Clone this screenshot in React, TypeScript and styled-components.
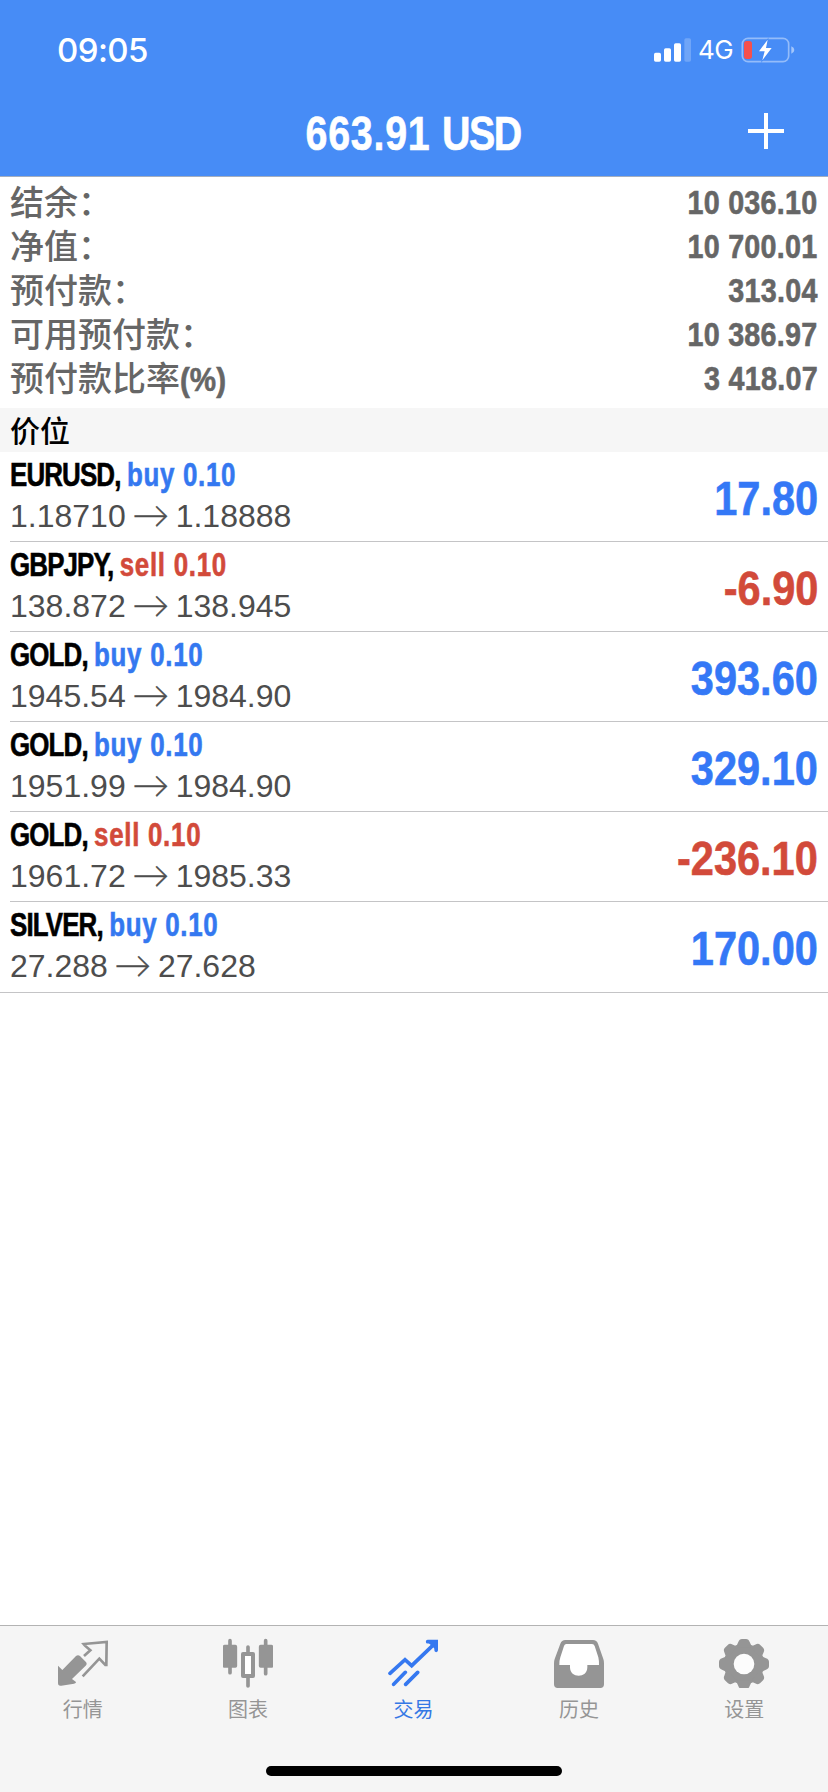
import React from 'react';
import styled, { createGlobalStyle } from 'styled-components';

const colors = {
  header: '#478cf6',
  blue: '#3478f0',
  red: '#d24a3a',
  label: '#666666',
  price: '#4d4d4d',
  line: '#c4c4c6',
  bar: '#f6f6f6',
  tab: '#959595',
};

const latin = '"Liberation Sans", Arial, sans-serif';
const chinese = '"Noto Sans CJK SC", sans-serif';

const GlobalStyle = createGlobalStyle`
  * { box-sizing: border-box; }
  body { margin: 0; background: #fff; font-family: ${latin}; }
`;

const Screen = styled.div`
  display: flex;
  flex-direction: column;
  width: 828px;
  height: 1792px;
  background: #fff;
`;

const Header = styled.header`
  height: 177px;
  flex: none;
  background: ${colors.header};
  border-bottom: 1px solid #a3aebf;
  color: #fff;
`;

const StatusBar = styled.div`
  display: flex;
  align-items: center;
  justify-content: space-between;
  height: 100px;
  padding: 0 33px 0 57px;
`;

const Clock = styled.time`
  font: 550 33px/40px Inter, sans-serif;
  letter-spacing: -0.6px;
`;

const StatusIcons = styled.div`
  display: flex;
  align-items: center;
`;

const Network = styled.span`
  margin: 0 8px 0 7px;
  font: 400 26px/32px Inter, sans-serif;
  letter-spacing: -0.6px;
`;

const TitleBar = styled.div`
  display: grid;
  grid-template-columns: 80px 1fr 80px;
  align-items: center;
  height: 66px;
`;

const Condensed = styled.span<{ $scale: number; $origin?: string; $spacing?: number }>`
  display: inline-block;
  font-weight: 700;
  white-space: pre;
  letter-spacing: ${p => p.$spacing ?? 0}px;
  transform: scaleX(${p => p.$scale});
  transform-origin: ${p => p.$origin ?? 'left'} center;
  -webkit-text-stroke: 0.6px currentColor;
`;

const Title = styled.h1`
  grid-column: 2;
  margin: 0;
  padding: 2px 2px 0 0;
  text-align: center;
  font-size: 48px;
  line-height: 56px;
`;

const Tight = styled.span<{ $spacing: number }>`
  letter-spacing: ${p => p.$spacing}px;
`;

const AddButton = styled.button`
  display: flex;
  padding: 0 0 4px;
  border: 0;
  background: none;
  color: inherit;
`;

const Summary = styled.dl`
  flex: none;
  margin: 0;
  padding: 3px 10px 8px;
  color: ${colors.label};
`;

const SummaryRow = styled.div`
  display: flex;
  justify-content: space-between;
  height: 44px;
`;

const SummaryLabel = styled.dt`
  font-family: ${chinese};
  font-size: 34px;
  font-weight: 500;
  line-height: 42px;
  white-space: nowrap;
`;

const LabelSuffix = styled(Condensed)`
  font-family: ${latin};
  font-size: 34px;
  line-height: 40px;
`;

const SummaryValue = styled.dd`
  margin: 0;
  font-size: 33px;
  line-height: 46px;
`;

const SectionTitle = styled.h2`
  flex: none;
  height: 44px;
  margin: 0;
  padding-left: 10px;
  background: ${colors.bar};
  font: 500 30px/42px ${chinese};
`;

const Positions = styled.ul`
  flex: none;
  margin: 0;
  padding: 0;
  list-style: none;
  border-bottom: 1px solid ${colors.line};
`;

const PositionRow = styled.li`
  display: flex;
  justify-content: space-between;
  height: 90px;
  margin-left: 10px;
  padding-right: 10px;
  border-bottom: 1px solid ${colors.line};

  &:last-child { border-bottom-color: transparent; }
`;

const Deal = styled.div`
  font-size: 33px;
  line-height: 45px;
`;

const Side = styled.span<{ $side: 'buy' | 'sell' }>`
  letter-spacing: 0.9px;
  color: ${p => (p.$side === 'buy' ? colors.blue : colors.red)};
`;

const Prices = styled.div`
  display: flex;
  font-size: 32px;
  line-height: 38px;
  color: ${colors.price};
`;

const Arrow = styled.span`
  width: 50px;
  text-align: center;
  font-family: Lato, sans-serif;
  font-size: 37px;
  font-weight: 300;
  line-height: 33px;
  -webkit-text-stroke: 0.4px currentColor;
`;

const Amount = styled.div<{ $loss: boolean }>`
  font-size: 48px;
  line-height: 94px;
  color: ${p => (p.$loss ? colors.red : '#3478f6')};
`;

const Footer = styled.footer`
  display: flex;
  flex-direction: column;
  flex: none;
  height: 167px;
  margin-top: auto;
  padding-bottom: 16px;
  background: #f5f5f5;
  border-top: 1px solid #b3b3b3;
`;

const Tabs = styled.nav`
  display: grid;
  grid-template-columns: repeat(5, 1fr);
  padding: 12px 1px 0 0;
`;

const Tab = styled.button<{ $active?: boolean }>`
  display: flex;
  flex-direction: column;
  align-items: center;
  gap: 6px;
  padding: 0;
  border: 0;
  background: none;
  color: ${p => (p.$active ? '#3578e5' : colors.tab)};
  font: 400 20px/30px ${chinese};
`;

const HomeIndicator = styled.div`
  width: 296px;
  height: 10px;
  margin: auto auto 0;
  border-radius: 5px;
  background: #000;
`;

const SignalIcon = () => (
  <svg width="37" height="24" viewBox="0 0 111 72" fill="#fff">
    <rect x="0" y="44" width="21" height="27" rx="5" />
    <rect x="30" y="31" width="21" height="40" rx="5" />
    <rect x="60" y="16" width="21" height="55" rx="5" />
    <rect x="91" y="1" width="20" height="70" rx="5" opacity="0.22" />
  </svg>
);

const BatteryIcon = () => (
  <svg width="54" height="26" viewBox="0 0 162 78" fill="none">
    <rect x="4" y="4" width="139" height="70" rx="17" stroke="#fff" strokeOpacity="0.42" strokeWidth="5" />
    <path d="M151 28q9 4 9 11t-9 11z" fill="#fff" fillOpacity="0.5" />
    <rect x="9" y="12" width="24" height="54" rx="8" fill="#f4504d" />
    <path d="M83 1L50 46h18l-8 32 37-47H77z" fill={colors.header} />
    <path d="M80 8L54 43h17l-7 27 28-37H75z" fill="#fff" />
  </svg>
);

const PlusIcon = () => (
  <svg width="36" height="36" viewBox="0 0 36 36" stroke="#fff" strokeWidth="4">
    <path d="M18 0v36M0 18h36" />
  </svg>
);

const QuotesIcon = () => (
  <svg width="50" height="50" viewBox="171 84 150 150">
    <path d="M171 167L184 180 225 138Q231 133 237 138L254 155Q260 161 254 167L213 207 225 216Q226 220 219 221L181 227Q171 229 171 219Z" fill="currentColor" />
    <path d="M249 138L268 121 252 107 248 102 317 96 316 165 313 165 295 146 245 199" fill="none" stroke="currentColor" strokeWidth="8" />
  </svg>
);

const ChartIcon = () => (
  <svg width="50" height="50" viewBox="669 84 150 150" fill="none" stroke="currentColor" strokeLinecap="round">
    <path d="M690 92v96M797 92v99M744 111v14M744 204v24" strokeWidth="11" />
    <rect x="671" y="107" width="38" height="64" rx="3" fill="currentColor" strokeWidth="5" />
    <rect x="779" y="107" width="38" height="64" rx="3" fill="currentColor" strokeWidth="5" />
    <rect x="729" y="132" width="30" height="66" fill="#fff" strokeWidth="12" strokeLinejoin="round" />
  </svg>
);

const TradeIcon = () => (
  <svg width="50" height="50" viewBox="324 84 150 150" fill="none" stroke="#3578f0" strokeWidth="11" strokeLinecap="round">
    <path d="M330 190L375 149 395 167 464 101M341 223L376 187M377 223L413 187" strokeLinejoin="miter" />
    <path d="M442 95H469V121Z" fill="#3578f0" stroke="none" />
    <path d="M443 95H468.500V121" />
  </svg>
);

const HistoryIcon = () => (
  <svg width="50" height="50" viewBox="75 84 150 150">
    <path
      fill="currentColor"
      d="M109 90H192Q203 90 207 101L223 147Q225 152 225 160V223Q225 234 214 234H86Q75 234 75 223V160Q75 152 77 147L94 101Q98 90 109 90Z"
    />
    <path
      fill="#fff"
      d="M112 102H189Q195 102 197 108L208 142Q210 150 210 165H175V172C175 206 123 206 123 172V165H91Q91 150 94 142L105 108Q107 102 112 102Z"
    />
  </svg>
);

const SettingsIcon = () => (
  <svg width="50" height="50" viewBox="-75 -78 150 150">
    <g fill="currentColor">
      <circle r="60" />
      {[0, 45, 90, 135, 180, 225, 270, 315].map(angle => (
        <path
          key={angle}
          transform={`rotate(${angle})`}
          d="M-29 -50Q-20 -55 -17 -66Q-14 -75 -6 -75H6Q14 -75 17 -66Q20 -55 29 -50Z"
        />
      ))}
    </g>
    <circle r="31" fill="#fcfcfc" />
  </svg>
);

const summary = [
  { label: '结余：', value: '10 036.10' },
  { label: '净值：', value: '10 700.01' },
  { label: '预付款：', value: '313.04' },
  { label: '可用预付款：', value: '10 386.97' },
  { label: '预付款比率', suffix: '(%)', value: '3 418.07' },
];

const positions: { symbol: string; side: 'buy' | 'sell'; open: string; current: string; profit: string }[] = [
  { symbol: 'EURUSD', side: 'buy', open: '1.18710', current: '1.18888', profit: '17.80' },
  { symbol: 'GBPJPY', side: 'sell', open: '138.872', current: '138.945', profit: '-6.90' },
  { symbol: 'GOLD', side: 'buy', open: '1945.54', current: '1984.90', profit: '393.60' },
  { symbol: 'GOLD', side: 'buy', open: '1951.99', current: '1984.90', profit: '329.10' },
  { symbol: 'GOLD', side: 'sell', open: '1961.72', current: '1985.33', profit: '-236.10' },
  { symbol: 'SILVER', side: 'buy', open: '27.288', current: '27.628', profit: '170.00' },
];

const tabs = [
  { label: '行情', Icon: QuotesIcon },
  { label: '图表', Icon: ChartIcon },
  { label: '交易', Icon: TradeIcon, active: true },
  { label: '历史', Icon: HistoryIcon },
  { label: '设置', Icon: SettingsIcon },
];

export default function App() {
  return (
    <Screen>
      <GlobalStyle />
      <Header>
        <StatusBar>
          <Clock>09:05</Clock>
          <StatusIcons>
            <SignalIcon />
            <Network>4G</Network>
            <BatteryIcon />
          </StatusIcons>
        </StatusBar>
        <TitleBar>
          <Title>
            <Condensed $scale={0.82} $origin="center">
              <Tight $spacing={0.9}>663.91 </Tight>
              <Tight $spacing={-1.8}>USD</Tight>
            </Condensed>
          </Title>
          <AddButton aria-label="+">
            <PlusIcon />
          </AddButton>
        </TitleBar>
      </Header>

      <Summary>
        {summary.map(item => (
          <SummaryRow key={item.label}>
            <SummaryLabel>
              {item.label}
              {item.suffix && <LabelSuffix $scale={0.87}>{item.suffix}</LabelSuffix>}
            </SummaryLabel>
            <SummaryValue>
              <Condensed $scale={0.87} $origin="right" $spacing={0.3}>{item.value}</Condensed>
            </SummaryValue>
          </SummaryRow>
        ))}
      </Summary>

      <SectionTitle>价位</SectionTitle>

      <Positions>
        {positions.map(p => (
          <PositionRow key={p.symbol + p.open}>
            <div>
              <Deal>
                <Condensed $scale={0.785}>
                  <Tight $spacing={-1.1}>{p.symbol}, </Tight>
                  <Side $side={p.side}>{p.side} 0.10</Side>
                </Condensed>
              </Deal>
              <Prices>
                <span>{p.open}</span>
                <Arrow>→</Arrow>
                <span>{p.current}</span>
              </Prices>
            </div>
            <Amount $loss={p.profit.startsWith('-')}>
              <Condensed $scale={0.865} $origin="right">{p.profit}</Condensed>
            </Amount>
          </PositionRow>
        ))}
      </Positions>

      <Footer>
        <Tabs>
          {tabs.map(({ label, Icon, active }) => (
            <Tab key={label} $active={active}>
              <Icon />
              {label}
            </Tab>
          ))}
        </Tabs>
        <HomeIndicator />
      </Footer>
    </Screen>
  );
}
